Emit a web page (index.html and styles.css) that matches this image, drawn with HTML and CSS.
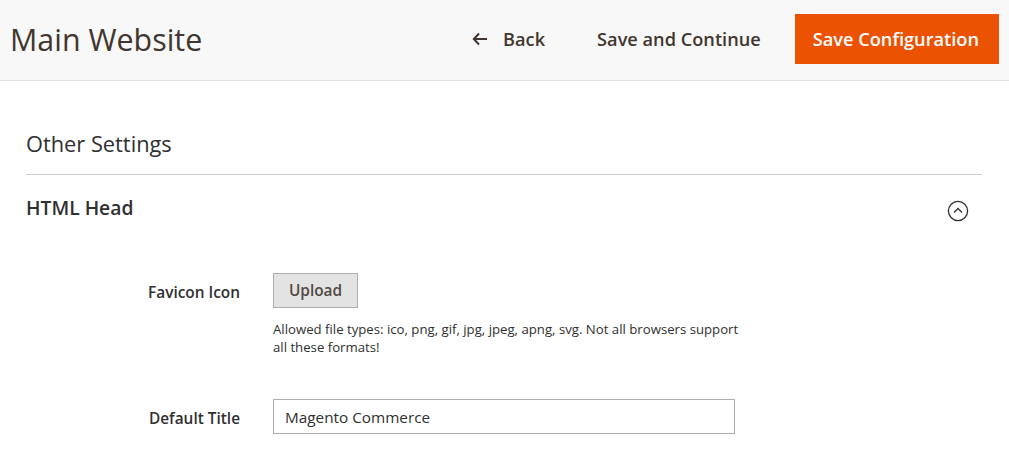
FILE: index.html
```html
<!DOCTYPE html>
<html>
<head>
<meta charset="utf-8">
<link rel="stylesheet" href="styles.css">
</head>
<body>
<header class="page-header">
  <h1 class="page-title">Main Website</h1>
  <div class="actions">
    <button class="btn-link back">
      <svg class="arrow" width="16" height="14" viewBox="0 0 16 14"><path d="M7 1.5 L1.8 7 L7 12.5 M2 7 H15" fill="none" stroke="#41362f" stroke-width="2"/></svg>
      <span>Back</span>
    </button>
    <button class="btn-link">Save and Continue</button>
    <button class="btn-primary">Save Configuration</button>
  </div>
</header>
<main class="content">
  <h2 class="section-title">Other Settings</h2>
  <div class="group-head">
    <h3 class="group-title">HTML Head</h3>
    <svg class="collapse" width="22" height="22" viewBox="0 0 22 22"><circle cx="11" cy="11" r="9.6" fill="none" stroke="#303030" stroke-width="1.3"/><path d="M7 12.5 L11 8.5 L15 12.5" fill="none" stroke="#303030" stroke-width="1.3"/></svg>
  </div>
  <div class="fields">
    <div class="field">
      <label class="label">Favicon Icon</label>
      <div class="control">
        <button class="btn-upload">Upload</button>
        <p class="note">Allowed file types: ico, png, gif, jpg, jpeg, apng, svg. Not all browsers support all these formats!</p>
      </div>
    </div>
    <div class="field field-title">
      <label class="label">Default Title</label>
      <div class="control">
        <input class="input" type="text" value="Magento Commerce">
      </div>
    </div>
  </div>
</main>
</body>
</html>
```
FILE: styles.css
```css
* { box-sizing: border-box; }
body {
  margin: 0;
  font-family: "Open Sans", "Liberation Sans", sans-serif;
  color: #303030;
  background: #fff;
}
.page-header {
  height: 81px;
  background: #f8f8f8;
  border-bottom: 1px solid #e3e3e3;
  display: flex;
  align-items: center;
  justify-content: space-between;
  padding: 0 10px 2px 10px;
}
.page-title {
  margin: 0;
  font-size: 30.4px;
  font-weight: 400;
  color: #41362f;
}
.actions {
  display: flex;
  align-items: center;
}
button {
  font-family: inherit;
}
.btn-link {
  background: none;
  border: 0;
  font-size: 18.2px;
  font-weight: 600;
  color: #41362f;
  padding: 0;
  display: flex;
  align-items: center;
  margin-right: 34px;
}
.back { margin-right: 52px; }
.arrow { margin-right: 15px; }
.btn-primary {
  background: #eb5202;
  border: 1px solid #eb5202;
  color: #fff;
  font-size: 18.2px;
  font-weight: 600;
  height: 50px;
  padding: 0 19px 0 17px;
}
.content {
  padding: 0 27px 0 26px;
}
.section-title {
  margin: 0;
  padding: 48px 0 16px;
  font-size: 21.8px;
  font-weight: 400;
  color: #303030;
  border-bottom: 1px solid #cccccc;
}
.group-head {
  display: flex;
  justify-content: space-between;
  align-items: center;
  padding: 17px 13px 0 0;
}
.group-title {
  margin: 0;
  font-size: 19.3px;
  font-weight: 600;
  color: #303030;
}
.collapse { margin-top: 8px; }
.fields { padding-top: 51px; }
.field {
  display: grid;
  grid-template-columns: 214px 1fr;
  column-gap: 33px;
}
.label {
  text-align: right;
  font-size: 15.4px;
  font-weight: 600;
  padding-top: 9px;
}
.btn-upload {
  background: #e3e3e3;
  border: 1px solid #adadad;
  color: #514943;
  font-size: 15.4px;
  font-weight: 600;
  height: 35px;
  width: 85px;
  padding: 0;
}
.note {
  margin: 12px 0 0;
  font-size: 13.2px;
  line-height: 18px;
  width: 470px;
  color: #303030;
}
.field-title { margin-top: 43px; }
.input {
  width: 462px;
  height: 35px;
  border: 1px solid #adadad;
  font-family: inherit;
  font-size: 15.3px;
  color: #303030;
  padding: 0 11px;
}
```
